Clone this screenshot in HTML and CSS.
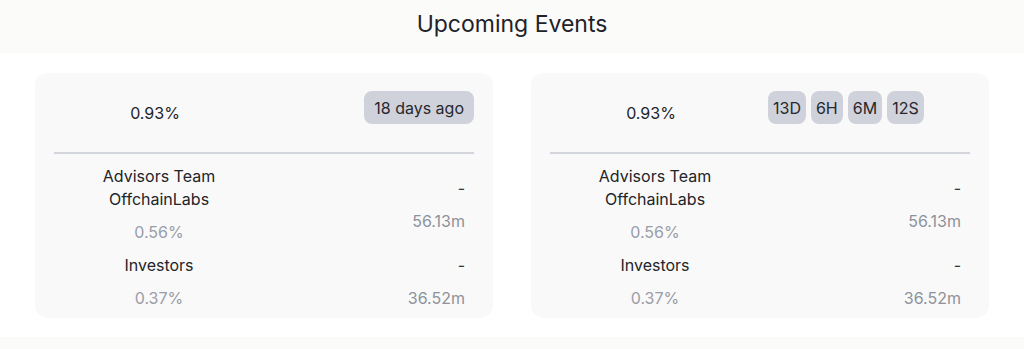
FILE: index.html
```html
<!DOCTYPE html>
<html lang="en">
<head>
<meta charset="utf-8">
<title>Upcoming Events</title>
<link rel="stylesheet" href="styles.css">
</head>
<body>
  <header class="title-bar">
    <h1 class="title">Upcoming Events</h1>
  </header>
  <main class="cards">
    <section class="card">
      <div class="card-top">
        <div class="top-pct">0.93%</div>
        <div class="top-right end">
          <span class="badge">18 days ago</span>
        </div>
      </div>
      <div class="card-rows">
        <div class="row">
          <div class="left">
            <div class="name">Advisors Team OffchainLabs</div>
            <div class="pct">0.56%</div>
          </div>
          <div class="right">
            <div class="dash">-</div>
            <div class="amount">56.13m</div>
          </div>
        </div>
        <div class="row">
          <div class="left">
            <div class="name">Investors</div>
            <div class="pct">0.37%</div>
          </div>
          <div class="right">
            <div class="dash">-</div>
            <div class="amount">36.52m</div>
          </div>
        </div>
      </div>
    </section>
    <section class="card">
      <div class="card-top">
        <div class="top-pct">0.93%</div>
        <div class="top-right chips">
          <span class="badge chip">13D</span>
          <span class="badge chip">6H</span>
          <span class="badge chip">6M</span>
          <span class="badge chip">12S</span>
        </div>
      </div>
      <div class="card-rows">
        <div class="row">
          <div class="left">
            <div class="name">Advisors Team OffchainLabs</div>
            <div class="pct">0.56%</div>
          </div>
          <div class="right">
            <div class="dash">-</div>
            <div class="amount">56.13m</div>
          </div>
        </div>
        <div class="row">
          <div class="left">
            <div class="name">Investors</div>
            <div class="pct">0.37%</div>
          </div>
          <div class="right">
            <div class="dash">-</div>
            <div class="amount">36.52m</div>
          </div>
        </div>
      </div>
    </section>
  </main>
  <footer class="bottom-band"></footer>
</body>
</html>
```

FILE: styles.css
```css
* { box-sizing: border-box; }

html, body {
  margin: 0;
  padding: 0;
  background: #ffffff;
  font-family: Inter, "Noto Sans", sans-serif;
  color: #222428;
}

.title-bar {
  height: 53px;
  background: #fbfbfa;
  padding-top: 10px;
}

.title {
  margin: 0;
  text-align: center;
  font-size: 23px;
  font-weight: 400;
  line-height: 28px;
  color: #1f2229;
}

.cards {
  display: grid;
  grid-template-columns: 1fr 1fr;
  gap: 38px;
  padding: 20px 35px 19px;
}

.card {
  background: #f9f9f9;
  border-radius: 12px;
  height: 245px;
  padding: 0 19px;
}

.card-top {
  display: flex;
  align-items: flex-start;
  padding-top: 18px;
  height: 81px;
  border-bottom: 2px solid #d3d5dd;
}

.top-pct {
  width: 202px;
  text-align: center;
  font-size: 16px;
  line-height: 23px;
  padding-top: 11px;
}

.top-right {
  flex: 1;
  display: flex;
  gap: 5px;
}

.top-right.end { justify-content: flex-end; }
.top-right.chips { padding-left: 16px; }

.badge {
  display: inline-flex;
  align-items: center;
  height: 33px;
  padding: 0 10px;
  border-radius: 8px;
  background: #d0d2db;
  font-size: 16px;
  color: #26282d;
}

.badge.chip {
  padding: 0 5px;
}

.card-rows {
  padding-top: 11px;
  display: flex;
  flex-direction: column;
  gap: 10px;
}

.row {
  display: flex;
  align-items: center;
}

.left {
  width: 210px;
  text-align: center;
  display: flex;
  flex-direction: column;
  gap: 10px;
}

.right {
  flex: 1;
  text-align: right;
  padding-right: 9px;
  display: flex;
  flex-direction: column;
  gap: 10px;
}

.name, .pct, .dash, .amount {
  font-size: 16px;
  line-height: 23px;
}

.name { color: #222428; padding: 0 40px; }
.pct { color: #9a9da6; }
.dash { color: #35373c; }
.amount { color: #8e919a; }

.bottom-band {
  height: 20px;
  background: #fbfbfa;
}
```
